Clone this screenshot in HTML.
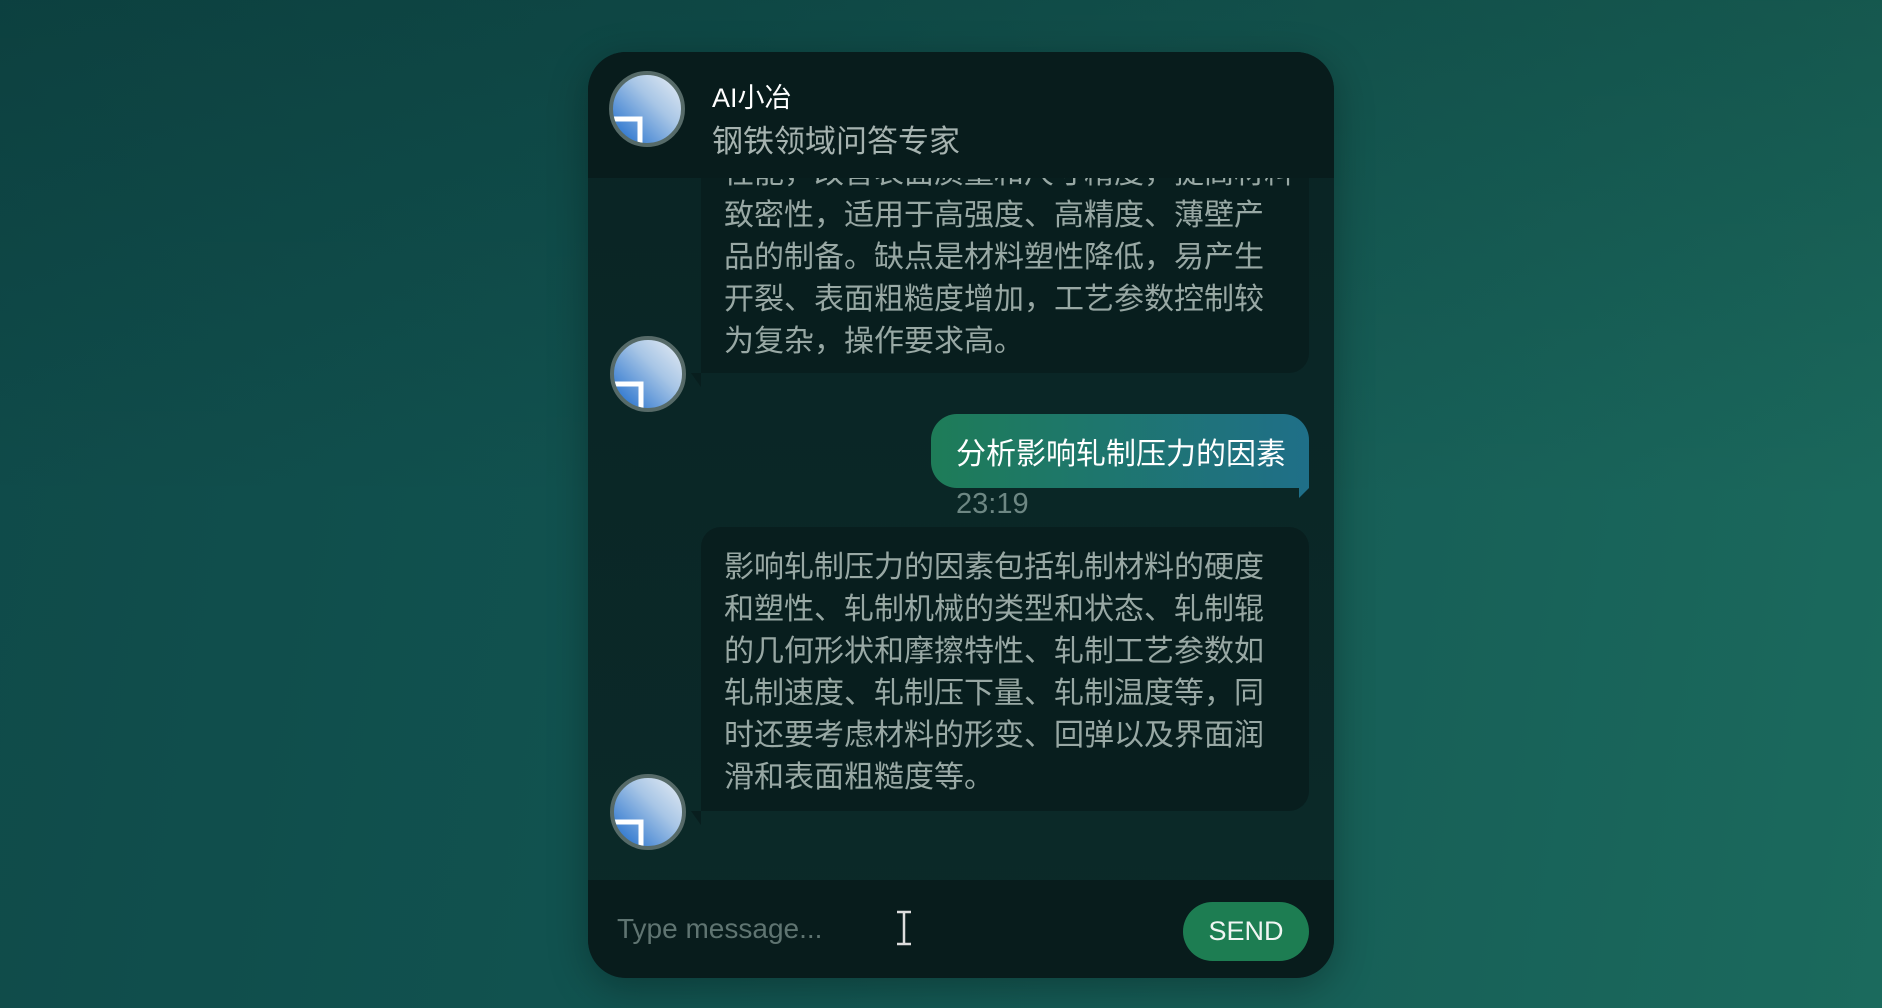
<!DOCTYPE html>
<html><head><meta charset="utf-8">
<style>
*{margin:0;padding:0;box-sizing:border-box}
html,body{width:1882px;height:1008px;overflow:hidden}
body{background:linear-gradient(100deg,#0f4a49 0%,#11524f 35%,#155b55 60%,#1b6a5d 100%);font-family:"Liberation Sans","Noto Sans CJK SC",sans-serif;position:relative}
body:before{content:"";position:absolute;inset:0;background:linear-gradient(180deg,rgba(0,20,20,.18),rgba(0,0,0,0) 50%)}
.box{position:absolute;left:588px;top:52px;width:746px;height:926px;border-radius:38px;overflow:hidden;background:linear-gradient(180deg,#0a2424,#0b2a29);box-shadow:0 10px 40px rgba(0,0,0,.3)}
.hdr{position:absolute;left:0;top:0;width:746px;height:126px;background:#081c1c;z-index:2}
.av{position:absolute;width:76px;height:76px;border-radius:50%;border:4px solid #566a68;overflow:hidden;background:linear-gradient(225deg,#e8eef4 0%,#a8c6e6 40%,#3c80d2 85%)}
.av svg{position:absolute;left:0;top:0}
.t1{position:absolute;left:124px;top:24px;color:#fff;font-size:27px}
.t2{position:absolute;left:124px;top:64px;color:#a6b3b0;font-size:31px}
.bub{position:absolute;left:113px;width:608px;background:#081e1e;border-radius:20px 20px 20px 0;color:#98a8a4;font-size:30px;line-height:42px;padding:0 30px 0 23px;font-family:"Noto Sans CJK SC",sans-serif;white-space:nowrap}
.bub:after{content:"";position:absolute;left:-10px;bottom:-14px;border-top:14px solid #081e1e;border-left:10px solid transparent}
.ub{position:absolute;left:343px;top:362px;width:378px;height:74px;border-radius:26px 26px 0 26px;background:linear-gradient(90deg,#1e7c58,#1f6f88);color:#fff;font-size:30px;line-height:74px;padding-left:25px;font-family:"Noto Sans CJK SC",sans-serif;white-space:nowrap}
.ub:after{content:"";position:absolute;right:0;bottom:-10px;border-top:10px solid #1f6f88;border-right:10px solid transparent}
.tm{position:absolute;left:368px;top:436px;color:#6d8783;font-size:29px}
.inp{position:absolute;left:0;top:828px;width:746px;height:98px;background:#081c1c}
.ph{position:absolute;left:29px;top:33px;color:#5f7471;font-size:28px}
.send{position:absolute;left:595px;top:22px;width:126px;height:59px;border-radius:30px;background:#1d7d52;color:#f0f5f2;font-size:27px;text-align:center;line-height:59px}
</style></head><body>
<div class="box">
 <div class="hdr">
  <div class="av" style="left:21px;top:19px"><svg width="68" height="68"><path d="M0 44H27V70" fill="none" stroke="#fff" stroke-width="5"/></svg></div>
  <div class="t1">AI小冶</div>
  <div class="t2">钢铁领域问答专家</div>
 </div>
 <div class="bub" style="top:60px;height:261px;padding-top:37px">性能，改善表面质量和尺寸精度，提高材料<br>致密性，适用于高强度、高精度、薄壁产<br>品的制备。缺点是材料塑性降低，易产生<br>开裂、表面粗糙度增加，工艺参数控制较<br>为复杂，操作要求高。</div>
 <div class="av" style="left:22px;top:284px"><svg width="68" height="68"><path d="M0 44H27V70" fill="none" stroke="#fff" stroke-width="5"/></svg></div>
 <div class="ub">分析影响轧制压力的因素</div>
 <div class="tm">23:19</div>
 <div class="bub" style="top:475px;height:284px;padding-top:16px">影响轧制压力的因素包括轧制材料的硬度<br>和塑性、轧制机械的类型和状态、轧制辊<br>的几何形状和摩擦特性、轧制工艺参数如<br>轧制速度、轧制压下量、轧制温度等，同<br>时还要考虑材料的形变、回弹以及界面润<br>滑和表面粗糙度等。</div>
 <div class="av" style="left:22px;top:722px"><svg width="68" height="68"><path d="M0 44H27V70" fill="none" stroke="#fff" stroke-width="5"/></svg></div>
 <div class="inp">
  <div class="ph">Type message...</div>
  <svg style="position:absolute;left:306px;top:30px" width="20" height="36"><path d="M3 2H17M10 2V34M3 34H17" stroke="#ddd" stroke-width="2.5" fill="none"/></svg>
  <div class="send">SEND</div>
 </div>
</div>
</body></html>
